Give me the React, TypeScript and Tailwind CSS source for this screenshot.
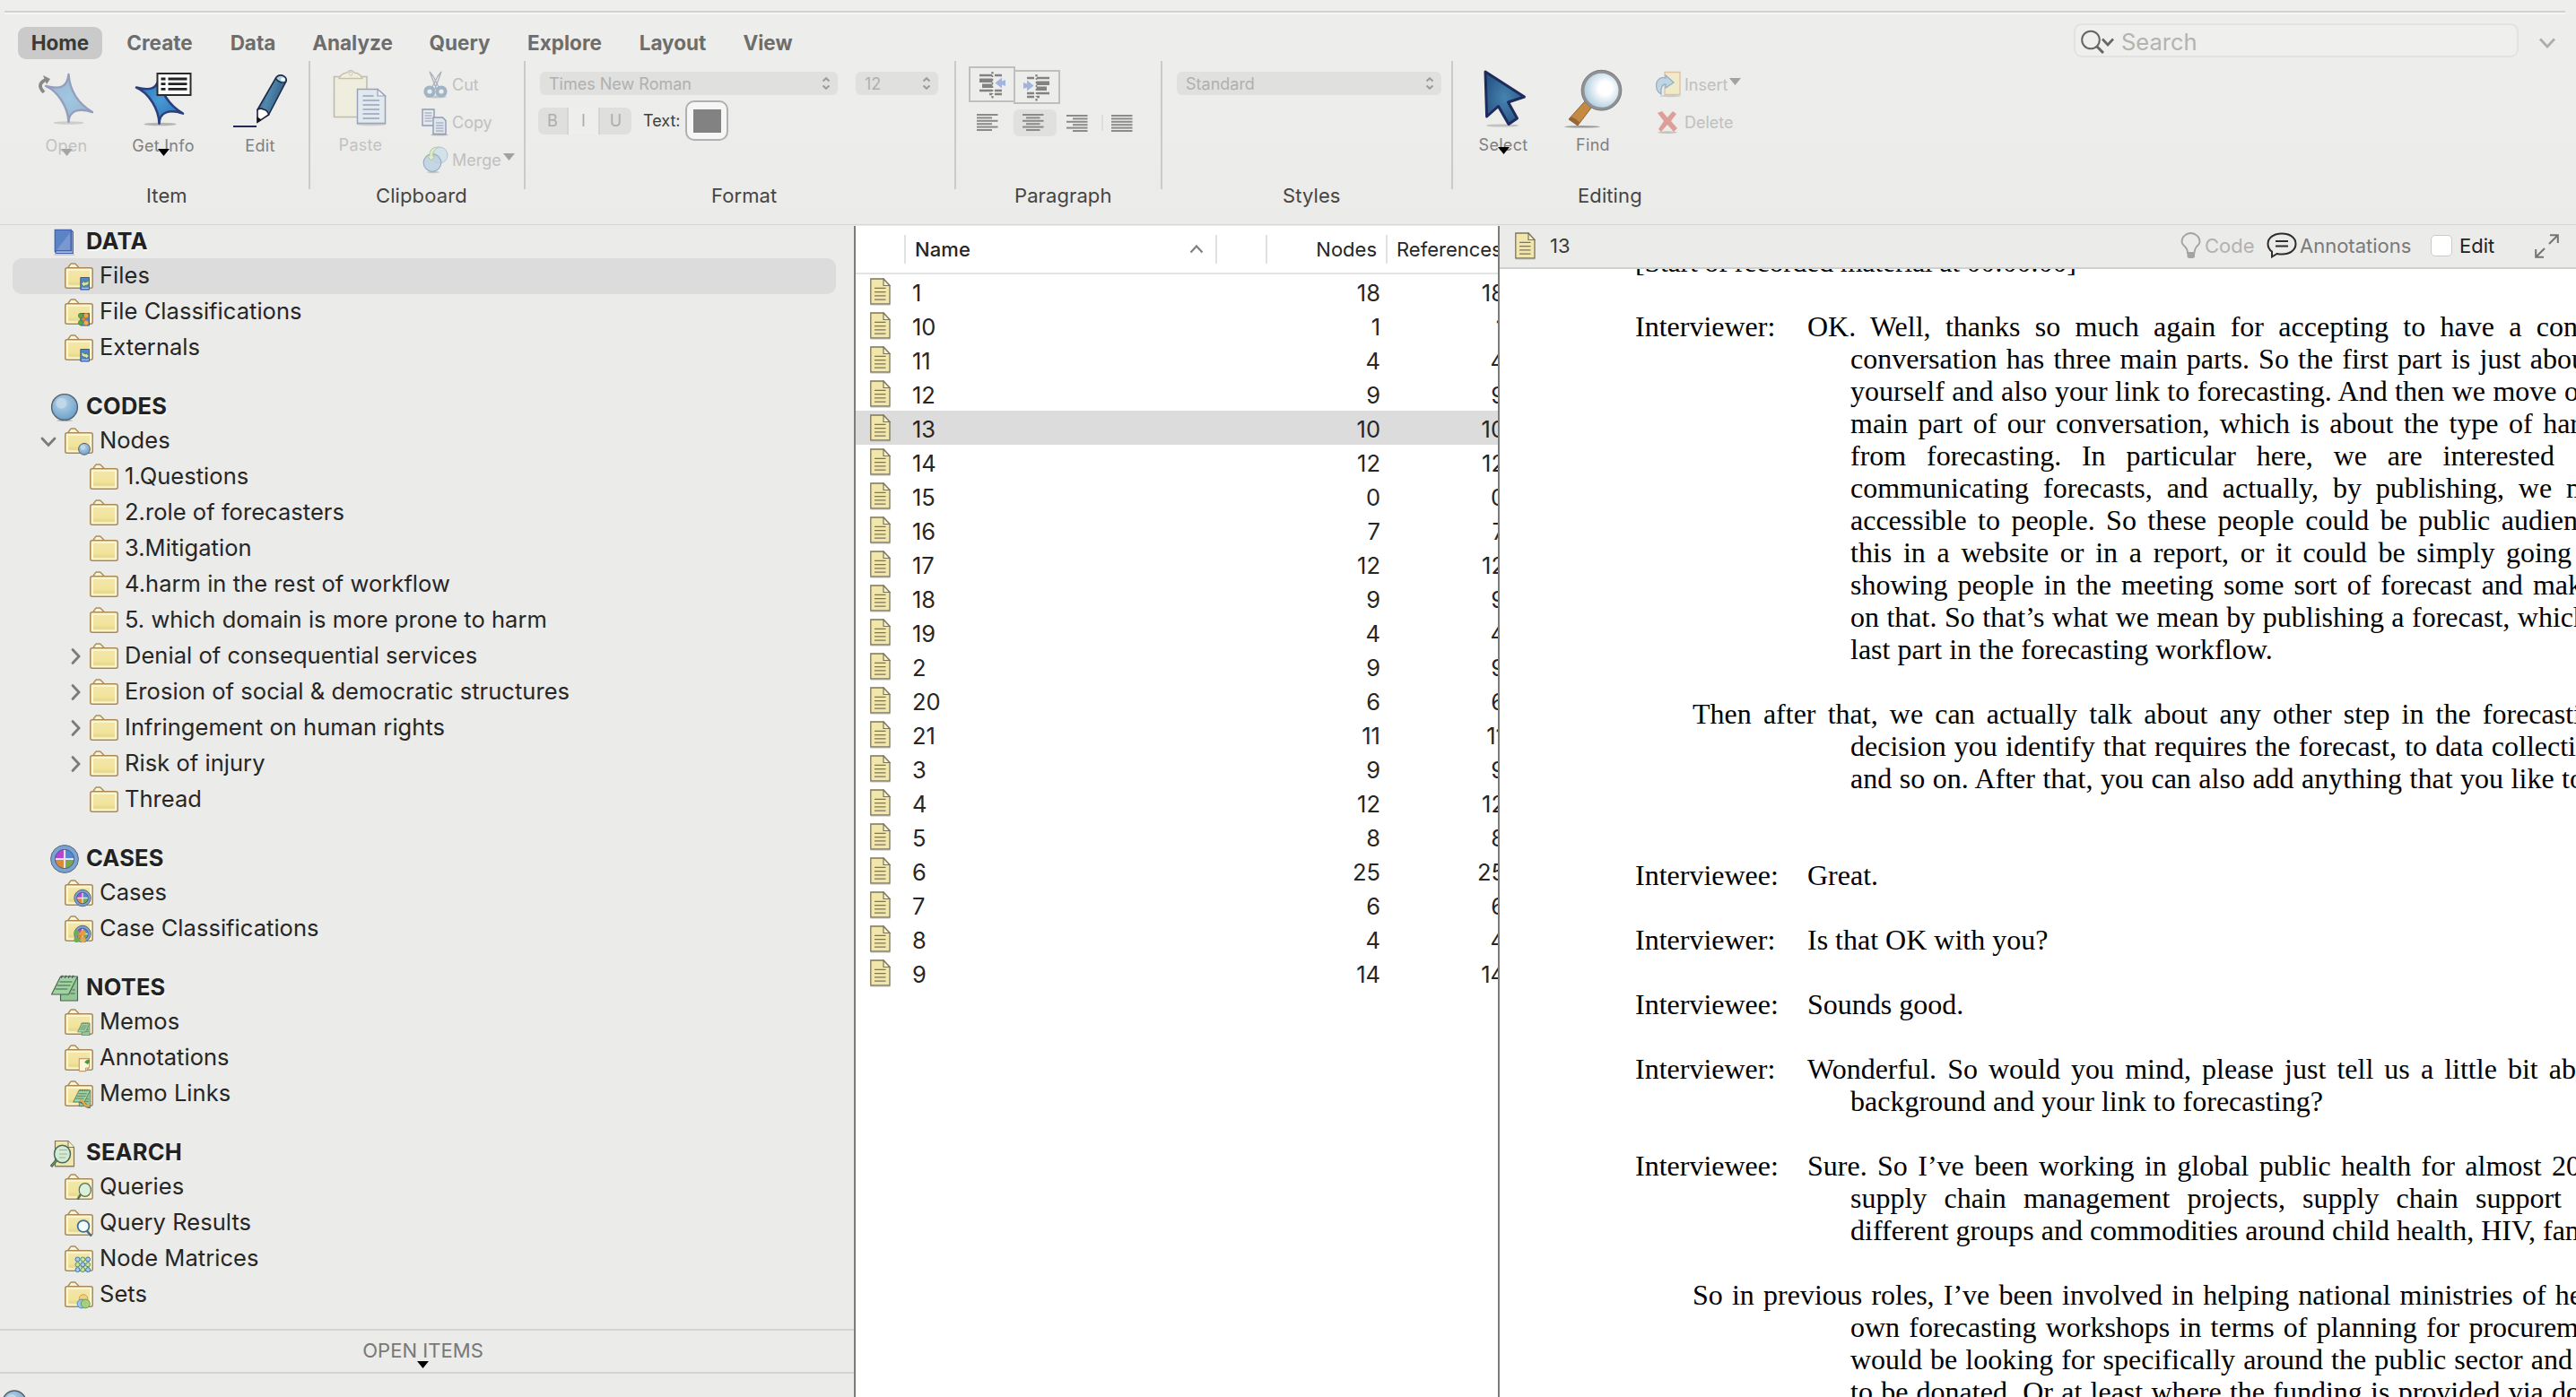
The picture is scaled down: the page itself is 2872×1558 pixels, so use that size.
import React from "react";

/* ---------- shared drawings ---------- */

const Ball = ({ cx, cy, r }: { cx: number; cy: number; r: number }) => (
  <g>
    <circle cx={cx} cy={cy} r={r} fill="url(#ball)" stroke="#55606b" strokeWidth={r > 8 ? 1.4 : 1} />
    <circle cx={cx - r * 0.25} cy={cy - r * 0.3} r={r * 0.42} fill="#c3dbea" opacity="0.8" />
  </g>
);

const Wheel = ({ cx, cy, r }: { cx: number; cy: number; r: number }) => {
  const i = r * 0.69;
  return (
    <g>
      <circle cx={cx} cy={cy} r={r} fill="#7ba3d2" stroke="#54687e" strokeWidth="1" />
      <circle cx={cx} cy={cy} r={i} fill="#5488d4" />
      <path d={`M${cx} ${cy}V${cy - i}A${i} ${i} 0 0 0 ${cx - i} ${cy}Z`} fill="#b546d3" />
      <path d={`M${cx} ${cy}H${cx - i}A${i} ${i} 0 0 0 ${cx} ${cy + i}Z`} fill="#dc8a35" />
      <path d={`M${cx} ${cy}V${cy + i}A${i} ${i} 0 0 0 ${cx + i} ${cy}Z`} fill="#79a650" />
      <path d={`M${cx} ${cy - i}V${cy + i}M${cx - i} ${cy}H${cx + i}`} stroke="#e6e6ea" strokeWidth={r * 0.14} />
      <circle cx={cx} cy={cy} r={i} fill="none" stroke="#46597a" strokeWidth="0.9" />
    </g>
  );
};

const Pad = () => (
  <g stroke="#4c5f51" strokeWidth="1.1" strokeLinejoin="round">
    <path d="M11 3H30V29H11Z" fill="#93c896" />
    <path d="M11 2H30L20 22H1Z" fill="#9dd4a0" />
    <path d="M10 8H24M7 12H22M5 16H19M24 17H27M22 21H27" fill="none" />
    <path d="M12 4q0-4 2-2M16 4q0-4 2-2M20 4q0-4 2-2M24 4q0-4 2-2" fill="none" />
  </g>
);

const Defs = () => (
  <svg className="absolute h-0 w-0">
    <defs>
      <radialGradient id="ball" cx="0.42" cy="0.35" r="0.75">
        <stop offset="0" stopColor="#b9d4e6" />
        <stop offset="0.55" stopColor="#8ab4d6" />
        <stop offset="1" stopColor="#5d97c6" />
      </radialGradient>
      <radialGradient id="star" cx="0.5" cy="0.5" r="0.5">
        <stop offset="0" stopColor="#4a9ad8" />
        <stop offset="1" stopColor="#2f77b6" />
      </radialGradient>
      <radialGradient id="cursor" cx="0.5" cy="0.5" r="0.55">
        <stop offset="0" stopColor="#4584b0" />
        <stop offset="1" stopColor="#2b5687" />
      </radialGradient>
      <linearGradient id="pencil" x1="0" y1="0" x2="1" y2="0.4">
        <stop offset="0" stopColor="#2c5a80" />
        <stop offset="0.5" stopColor="#5288ad" />
        <stop offset="1" stopColor="#2c5a80" />
      </linearGradient>
      <radialGradient id="lens" cx="0.6" cy="0.45" r="0.6">
        <stop offset="0.3" stopColor="#ffffff" />
        <stop offset="1" stopColor="#a9c9dc" />
      </radialGradient>
      <linearGradient id="folder" x1="0" y1="0" x2="0" y2="1">
        <stop offset="0" stopColor="#f1e6ab" />
        <stop offset="1" stopColor="#f3e293" />
      </linearGradient>
    </defs>
  </svg>
);

const Dots4 = () => (
  <g strokeWidth="0.6">
    <path d="M18 20L24 28M24 20L18 28" stroke="#b07b3a" strokeWidth="1.4" />
    <circle cx="18" cy="20" r="2.7" fill="#5aa546" stroke="#3f7d33" />
    <circle cx="24" cy="20" r="2.7" fill="#f0a53c" stroke="#b9772a" />
    <circle cx="18" cy="28" r="2.7" fill="#5aa546" stroke="#3f7d33" />
    <circle cx="24" cy="28" r="2.7" fill="#f0b04c" stroke="#b9772a" />
    <circle cx="21" cy="24" r="1.8" fill="#e8822b" />
  </g>
);

const Book = () => (
  <g>
    <path d="M17.8 17.5H27.5V31H17.8Z" fill="#5482cc" stroke="#3b59a8" strokeWidth="1" />
    <path d="M19 29.4H27" stroke="#b9cdef" strokeWidth="1.2" />
  </g>
);

type Badge =
  | "none" | "files" | "fileClass" | "externals" | "ball" | "wheel" | "caseClass"
  | "pad" | "note" | "padLink" | "query" | "results" | "matrix" | "sets";

const Folder = ({ badge = "none" }: { badge?: Badge }) => (
  <svg width="34" height="34" viewBox="0 0 34 34" className="shrink-0">
    <path d="M3.5 7L6.5 2.6Q7 2 8 2H11Q12 2 12.8 3L16.5 7" fill="#fbf5cf" stroke="#a98c60" strokeWidth="1.4" />
    <rect x="0.8" y="6.7" width="30.4" height="22.6" rx="2" fill="#fdf8d2" stroke="#a98857" strokeWidth="1.5" />
    <rect x="4" y="9.8" width="24" height="16.4" rx="1.2" fill="url(#folder)" />
    <path d="M4 22.5H28V25.5Q28 26.2 27 26.2H5Q4 26.2 4 25.5Z" fill="#eadb93" />
    {badge === "files" && (
      <g>
        <Book />
        <path d="M18.6 24.5L22.5 21V23Q25 23 27 20.5V25Q25 26.5 22.5 26.5V28.5Z" fill="#cfe6b4" stroke="#4f7a44" strokeWidth="0.8" />
      </g>
    )}
    {badge === "externals" && (
      <g>
        <Book />
        <path d="M27.4 25L23.5 21.5V23Q21 22.5 19 20V24.5Q21 26.5 23.5 26.5V28.5Z" fill="#cfe6b4" stroke="#4f7a44" strokeWidth="0.8" />
      </g>
    )}
    {badge === "fileClass" && (<g><Book /><Dots4 /></g>)}
    {badge === "ball" && <Ball cx={22} cy={24.8} r={6.4} />}
    {badge === "wheel" && <Wheel cx={20} cy={21.5} r={9.2} />}
    {badge === "caseClass" && (
      <g>
        <Wheel cx={20} cy={21.5} r={9.2} />
        <circle cx="13.5" cy="20.5" r="3.1" fill="#6fae4f" />
        <circle cx="20.5" cy="20.5" r="3.1" fill="#e6a03e" />
        <circle cx="17" cy="24" r="2.4" fill="#e8822b" />
        <circle cx="13.5" cy="28" r="3.1" fill="#6fae4f" />
        <circle cx="20.5" cy="28" r="3.1" fill="#e0a94a" />
      </g>
    )}
    {badge === "pad" && <g transform="translate(14 16) scale(0.47 0.5)"><Pad /></g>}
    {badge === "padLink" && (
      <g>
        <g transform="translate(9 10.5) scale(0.66)"><Pad /></g>
        <path d="M17 24Q21 25 23 28T28.5 30" fill="none" stroke="#3c6ea8" strokeWidth="3.4" />
        <path d="M17 23Q21 24 22 27T28 29" fill="none" stroke="#e9a93a" strokeWidth="2.4" />
      </g>
    )}
    {badge === "note" && (
      <g>
        <path d="M16.3 16.6H27.6V26L23.5 30.6H16.3Z" fill="#fcf6da" stroke="#c79a6b" strokeWidth="1.1" />
        <path d="M23.5 30.6V27H27.4" fill="none" stroke="#c79a6b" strokeWidth="1" />
        <path d="M22 20.5L25 18L28 17.5V21L25.5 23Z" fill="#4c9a3c" />
      </g>
    )}
    {badge === "query" && (
      <g>
        <path d="M18 24L14.5 29.5" stroke="#4f7350" strokeWidth="2.4" />
        <ellipse cx="22.8" cy="19" rx="6.6" ry="7.4" fill="#dcefd8" stroke="#54735a" strokeWidth="1.2" />
      </g>
    )}
    {badge === "results" && (
      <g>
        <path d="M25 25L30 30.5" stroke="#3b6f98" strokeWidth="2.6" />
        <circle cx="21" cy="19.5" r="6.4" fill="#f6fbff" stroke="#3d7099" strokeWidth="1.8" />
      </g>
    )}
    {badge === "matrix" &&
      [0, 1, 2].map((r) =>
        [0, 1, 2].map((c) => (
          <circle
            key={`${r}${c}`}
            cx={14.5 + c * 5.8}
            cy={16.5 + r * 5.8}
            r="2.5"
            fill={(r + c) % 2 ? "#c4e3a4" : "#a5cdf0"}
            stroke={(r + c) % 2 ? "#5f8f57" : "#41719f"}
            strokeWidth="1"
          />
        ))
      )}
    {badge === "sets" && (
      <g strokeWidth="0.9">
        <circle cx="21" cy="20.5" r="4.8" fill="#efd384" stroke="#c79a3c" />
        <circle cx="19" cy="26" r="4.9" fill="#9cc4ee" stroke="#4c7fc0" />
        <circle cx="23.3" cy="26" r="4.9" fill="#a5d07a" stroke="#5e9a3f" fillOpacity="0.9" />
      </g>
    )}
  </svg>
);

const Doc = () => (
  <svg width="24" height="31" viewBox="0 0 24 31" className="shrink-0">
    <path d="M0.5 29.8H22.5" stroke="#c9c9c7" strokeWidth="1.6" />
    <path d="M0.8 1H15L22 8.5V28.8H0.8Z" fill="#f1e7ac" stroke="#7c755c" strokeWidth="1.3" />
    <path d="M15 1V8.5H22Z" fill="#f8f2cc" stroke="#7c755c" strokeWidth="1.2" />
    <path d="M5 11.3H17.5M5 15.6H17.5M5 19.9H17.5M5 24.2H17.5" stroke="#7c755c" strokeWidth="1.3" />
  </svg>
);

const Tri = ({ className }: { className: string }) => (
  <svg width="13" height="8" viewBox="0 0 13 8" className={className}>
    <path d="M0 0H13L6.5 8Z" fill="currentColor" />
  </svg>
);

const UpDown = () => (
  <svg width="10" height="14" viewBox="0 0 10 14" fill="none" stroke="#9b9b9a" strokeWidth="2">
    <path d="M1.5 4.5L5 1.2L8.5 4.5M1.5 9.5L5 12.8L8.5 9.5" />
  </svg>
);

/* ---------- ribbon ---------- */

const tabs: [string, string][] = [
  ["Home", "w-[94px]"],
  ["Create", "w-[104px]"],
  ["Data", "w-[80px]"],
  ["Analyze", "w-[118px]"],
  ["Query", "w-[97px]"],
  ["Explore", "w-[113px]"],
  ["Layout", "w-[104px]"],
  ["View", "w-[84px]"],
];

const STAR = "M48.5 9C47 23 40 26 23 22C37 28 48 46 48.5 62C49 49 60 46 75 51C60 42 50 28 48.5 9Z";

const OpenIcon = () => (
  <svg width="92" height="78" viewBox="0 0 92 78" className="opacity-45">
    <ellipse cx="48.5" cy="63" rx="17" ry="1.8" fill="#a9a9a9" />
    <path d={STAR} fill="url(#star)" stroke="#2b4285" strokeWidth="2.4" strokeLinejoin="round" />
    <path d="M21 29Q12 20 23 15" fill="none" stroke="#111" strokeWidth="3.8" />
    <path d="M20 10L28 14L24 20Z" fill="#111" />
  </svg>
);

const InfoIcon = () => (
  <svg width="92" height="78" viewBox="0 0 92 78">
    <ellipse cx="42.5" cy="64.5" rx="18" ry="1.8" fill="#b5b5b5" />
    <path d={STAR} fill="url(#star)" stroke="#2b3f7d" strokeWidth="2.6" strokeLinejoin="round" transform="translate(-7 1.6)" />
    <rect x="39.5" y="8" width="37" height="24" fill="#fff" stroke="#2b2b2b" strokeWidth="2" />
    <path d="M43.5 14H48.5M51.5 14H72.5M43.5 19.7H48.5M51.5 19.7H72.5M43.5 25.4H48.5M51.5 25.4H72.5" stroke="#222" strokeWidth="2.8" />
  </svg>
);

const EditIcon = () => (
  <svg width="92" height="78" viewBox="0 0 92 78">
    <path d="M16 67H42" stroke="#222a56" strokeWidth="2" />
    <path d="M43 48.5L63.5 13Q66 9 71 10.3Q76 12 74.8 17L55.5 54Z" fill="url(#pencil)" stroke="#1f2a4a" strokeWidth="1.6" />
    <path d="M63.5 13Q66 9 71 10.3Q76 12 74.8 17Q72 19 68.5 17.5Q64.5 16 63.5 13Z" fill="#a8cfe2" stroke="#1f2a4a" strokeWidth="1.4" />
    <ellipse cx="71.5" cy="14.4" rx="2.4" ry="1.8" fill="#fff" />
    <path d="M43 48.5Q46 46 50 48Q55 49.5 55.5 54L43 62.3Z" fill="#fff" stroke="#1f2038" strokeWidth="1.6" />
    <path d="M42.6 56L47.5 59.5L42.6 63Z" fill="#111" />
  </svg>
);

const PasteIcon = () => (
  <svg width="92" height="78" viewBox="0 0 92 78" className="opacity-45">
    <ellipse cx="58" cy="64.5" rx="17" ry="1.8" fill="#a9a9a9" />
    <path d="M16.5 11.5H53V56.5H16.5Z" fill="#f1efcf" stroke="#8a8467" strokeWidth="1.6" />
    <path d="M22 13.5Q24 8 31 7Q35 2 39 7Q46 8 48 13.5Z" fill="#f7f1c9" stroke="#9a8f68" strokeWidth="1.4" />
    <circle cx="35" cy="8.3" r="1.8" fill="#fff" stroke="#9a8f68" />
    <path d="M42.5 25.5H65L73.5 33V63.5H42.5Z" fill="#d3e6f2" stroke="#39477f" strokeWidth="1.5" />
    <path d="M65 25.5V33H73.5Z" fill="#f3f8fc" stroke="#39477f" strokeWidth="1.2" />
    <path d="M48.5 33H60.5M48.5 38H67M48.5 43H67M48.5 48H67M48.5 53H67M48.5 58H67" stroke="#39477f" strokeWidth="1.6" />
  </svg>
);

const CutIcon = () => (
  <svg width="32" height="34" viewBox="0 0 32 34" className="opacity-40">
    <ellipse cx="16" cy="31" rx="12" ry="1.4" fill="#888" />
    <path d="M9 3L13 8L20 22L16.5 22ZM22 3L18 8L11 22L15 22Z" fill="#fff" stroke="#4a5878" strokeWidth="1.3" />
    <circle cx="9" cy="25" r="4.6" fill="none" stroke="#2c618f" strokeWidth="4" />
    <circle cx="22" cy="25" r="4.6" fill="none" stroke="#2c618f" strokeWidth="4" />
  </svg>
);

const CopyIcon = () => (
  <svg width="32" height="34" viewBox="0 0 32 34" className="opacity-50">
    <ellipse cx="20" cy="31.4" rx="10" ry="1.2" fill="#999" />
    <path d="M1 3H14V21H1Z" fill="#dfeaf4" stroke="#39477f" strokeWidth="1.4" />
    <path d="M3.5 7H11.5M3.5 10H11.5M3.5 13H11.5M3.5 16H11.5" stroke="#39477f" strokeWidth="1.1" />
    <path d="M13 12H23.5L27 15.5V30.5H13Z" fill="#cfe2f1" stroke="#39477f" strokeWidth="1.4" />
    <path d="M16 18H24.5M16 21H24.5M16 24H24.5M16 27H24.5" stroke="#39477f" strokeWidth="1.2" />
  </svg>
);

const MergeIcon = () => (
  <svg width="32" height="34" viewBox="0 0 32 34" className="opacity-45">
    <ellipse cx="13" cy="31" rx="7" ry="1.2" fill="#999" />
    <circle cx="20" cy="12" r="9" fill="#b8d4ec" stroke="#6a8fb3" strokeWidth="1" />
    <circle cx="12" cy="20.5" r="9.8" fill="#7fb2dc" fillOpacity="0.8" stroke="#34618f" strokeWidth="1.2" />
    <path d="M19 3Q8 3 9 13H6L11 18L15 13H12.5Q12 7 19 3Z" fill="#cbe8a6" stroke="#6f9f4e" strokeWidth="1" />
  </svg>
);

const SelectIcon = () => (
  <svg width="92" height="78" viewBox="0 0 92 78">
    <ellipse cx="45" cy="66" rx="18" ry="1.6" fill="#c2c2c2" />
    <path d="M26 6L69.5 34L51.5 40L61.5 58L52 64.5L40.5 44.5L27.6 56Z" fill="url(#cursor)" stroke="#1d2c5c" strokeWidth="3" strokeLinejoin="round" />
  </svg>
);

const FindIcon = () => (
  <svg width="92" height="78" viewBox="0 0 92 78">
    <ellipse cx="34" cy="67.3" rx="20" ry="1.2" fill="#9a9a9a" />
    <g transform="translate(-1 0)">
      <path d="M37.5 39.5L46 45L30 66L20 59Z" fill="#c48a42" stroke="#8a6031" strokeWidth="1" />
      <path d="M20 59L30 66L32 62.5Q28 58 22.5 56Z" fill="#966538" />
      <circle cx="56.5" cy="26.7" r="20.8" fill="url(#lens)" stroke="#8f9194" strokeWidth="3.6" />
      <circle cx="56.5" cy="26.7" r="22.4" fill="none" stroke="#77797c" strokeWidth="0.8" />
    </g>
  </svg>
);

const BigButton = ({
  icon, label, tone, arrow, up,
}: { icon: React.ReactNode; label: string; tone: string; arrow?: string; up?: boolean }) => (
  <div className="relative flex w-[92px] shrink-0 flex-col items-center">
    {icon}
    <span className={`${up ? "mt-0" : "mt-[1px]"} whitespace-nowrap text-[18px] leading-[20px] tracking-[0.3px] ${tone}`}>{label}</span>
    {arrow && <Tri className={`absolute left-[40px] ${up ? "top-[90px]" : "top-[92px]"} ${arrow}`} />}
  </div>
);

const SmallRow = ({ icon, label, arrow }: { icon: React.ReactNode; label: string; arrow?: boolean }) => (
  <div className="flex h-[42px] items-center">
    <div className="w-[34px] shrink-0">{icon}</div>
    <span className="pt-[1px] text-[18px] leading-[20px] text-[#c0c0bf]">{label}</span>
    {arrow && <Tri className="mb-[6px] ml-[2px] text-[#a2a2a1]" />}
  </div>
);

const Group = ({
  width, label, pad, last, children,
}: { width: string; label: string; pad: string; last?: boolean; children: React.ReactNode }) => (
  <div className={`flex h-[181px] shrink-0 flex-col ${width}`}>
    <div className={`h-[143px] pt-[6px] ${last ? "" : "border-r-2 border-[#cacac9]"}`}>{children}</div>
    <div className={`-mt-[8px] text-[22px] leading-[30px] tracking-[0.1px] text-[#454544] ${pad}`}>{label}</div>
  </div>
);

const Picker = ({ width, children }: { width: string; children: React.ReactNode }) => (
  <div className={`flex h-[26px] items-center justify-between rounded-[6px] bg-[#e0e0df] pl-[10px] pr-[8px] text-[18px] leading-[20px] text-[#b0b0af] ${width}`}>
    <span className="pt-[1px]">{children}</span>
    <UpDown />
  </div>
);

const Lines = ({ kind }: { kind: "left" | "center" | "right" | "full" }) => (
  <svg width="24" height="20" viewBox="0 0 24 20" stroke="#8b8b8a" strokeWidth="2">
    {[1, 4.4, 7.8, 11.2, 14.6, 18].map((y, i) => {
      const short = i % 2 === 1 && kind !== "full";
      const x1 = !short ? 0 : kind === "left" ? 0 : kind === "center" ? 4 : 7;
      const x2 = !short ? 23.5 : kind === "left" ? 17 : kind === "center" ? 19.5 : 23.5;
      return <line key={y} x1={x1} x2={x2} y1={y} y2={y} />;
    })}
  </svg>
);

const IndentIcon = ({ flip }: { flip?: boolean }) => (
  <svg width="30" height="34" viewBox="0 0 30 34" className={`shrink-0 ${flip ? "-scale-x-100" : ""}`}>
    <g stroke="#828281">
      <path d="M15.5 3V5.5M15.5 30V32.5" strokeWidth="2.2" />
      <path d="M15.5 7V28" strokeWidth="1.6" strokeDasharray="2 2" />
      <path d="M1 7H15M18 7H26M1 24H15M18 24H26M12 28H15M18 28H26" strokeWidth="2.4" />
      <path d="M1 12.8H15.5M4 18.8H15.5" strokeWidth="4.4" />
    </g>
    <path d="M18.5 15.5L26 9.5V13.5L30 12V19L26 17.5V21.5Z" fill="#a3b4dc" />
  </svg>
);

const Ribbon = () => (
  <div className="flex h-[250px] shrink-0 flex-col bg-gradient-to-b from-[#eeeeec] to-[#ebebe9]">
    <div className="ml-[5px] mr-[12px] mt-[12px] h-[4px] shrink-0 border-b-2 border-t-2 border-b-[#f6f6f5] border-t-[#d1d1d0]" />
    <div className="flex h-[52px] shrink-0 items-start justify-between">
      <div className="ml-[20px] mt-[14px] flex gap-[12px]">
        {tabs.map(([t, w], i) => (
          <div
            key={t}
            className={`flex h-[36px] items-center justify-center rounded-[9px] text-[22.5px] font-bold leading-[36px] ${w} ${
              i === 0 ? "bg-[#cacaca] text-[#3a3a3a]" : "text-[#6d6d6c]"
            }`}
          >
            {t}
          </div>
        ))}
      </div>
      <div className="flex items-start">
        <div className="mt-[10px] flex h-[38px] w-[496px] items-center rounded-[9px] border-2 border-[#e2e2e1] bg-[#efefed] pl-[6px]">
          <svg width="38" height="28" viewBox="0 0 38 28" fill="none" stroke="#666665" className="mt-[2px]">
            <circle cx="11" cy="12.5" r="9.8" strokeWidth="2" />
            <path d="M17.5 19.5L25 27" strokeWidth="3" />
            <path d="M24 11.5L30 18L36 11.5" strokeWidth="2.6" />
          </svg>
          <span className="ml-[7px] mt-[3px] text-[25.5px] leading-[31px] text-[#b3b3b2]">Search</span>
        </div>
        <svg width="18" height="12" viewBox="0 0 18 12" className="ml-[23px] mr-[23px] mt-[26px]" fill="none" stroke="#aeaead" strokeWidth="2.8">
          <path d="M1 1.5L9 10L17 1.5" />
        </svg>
      </div>
    </div>
    <div className="flex">
      <Group width="w-[346px]" label="Item" pad="pl-[163px]">
        <div className="flex gap-[16px] pl-[28px]">
          <BigButton icon={<OpenIcon />} label="Open" tone="text-[#c2c2c1]" arrow="text-[#a5a5a4]" />
          <BigButton icon={<InfoIcon />} label="Get Info" tone="text-[#80807f]" arrow="text-black" />
          <BigButton icon={<EditIcon />} label="Edit" tone="text-[#80807f]" />
        </div>
      </Group>
      <Group width="w-[240px]" label="Clipboard" pad="pl-[73px]">
        <div className="flex pl-[10px]">
          <BigButton icon={<PasteIcon />} label="Paste" tone="text-[#c2c2c1]" up />
          <div className="ml-[22px] mt-[-1px]">
            <SmallRow icon={<CutIcon />} label="Cut" />
            <SmallRow icon={<CopyIcon />} label="Copy" />
            <SmallRow icon={<MergeIcon />} label="Merge" arrow />
          </div>
        </div>
      </Group>
      <Group width="w-[480px]" label="Format" pad="pl-[207px]">
        <div className="flex gap-[20px] pl-[16px] pt-[6px]">
          <Picker width="w-[332px]">Times New Roman</Picker>
          <Picker width="w-[92px]">12</Picker>
        </div>
        <div className="flex items-center pl-[14px] pt-[6px]">
          <div className="flex h-[30px] w-[104px] overflow-hidden rounded-[7px] bg-[#dfdfde] text-center text-[18px] leading-[29px] text-[#adadac]">
            <span className="w-[32px]">B</span>
            <span className="w-[37px] border-x-2 border-[#d5d5d4] bg-[#eeeeed]">I</span>
            <span className="w-[35px]">U</span>
          </div>
          <span className="ml-[13px] w-[47px] pt-[1px] text-[18px] leading-[20px] text-[#3f3f3e]">Text:</span>
          <div className="flex h-[45px] w-[48px] items-center justify-center rounded-[10px] border-2 border-[#b0b0af] bg-[#f6f6f6]">
            <div className="h-[26px] w-[31px] bg-[#828282]" />
          </div>
        </div>
      </Group>
      <Group width="w-[230px]" label="Paragraph" pad="pl-[65px]">
        <div className="flex items-start pl-[14px]">
          <div className="flex h-[40px] w-[52px] items-center justify-center border-2 border-[#bfbfbe]"><IndentIcon /></div>
          <div className="-ml-[2px] mt-[4px] flex h-[38px] w-[52px] items-center justify-center border-2 border-[#bfbfbe]"><IndentIcon flip /></div>
        </div>
        <div className="mt-[6px] flex items-center pl-[23px]">
          <Lines kind="left" />
          <div className="ml-[17px] mr-[11px] flex h-[30px] w-[48px] items-center rounded-[6px] bg-[#e0e0df] pl-[10px]"><Lines kind="center" /></div>
          <div className="mt-[2px]"><Lines kind="right" /></div>
          <div className="ml-[15px] mr-[9px] h-[18px] w-[2px] bg-[#dededd]" />
          <div className="mt-[2px]"><Lines kind="full" /></div>
        </div>
      </Group>
      <Group width="w-[324px]" label="Styles" pad="pl-[134px]">
        <div className="pl-[16px] pt-[6px]">
          <Picker width="w-[295px]">Standard</Picker>
        </div>
      </Group>
      <Group width="w-[400px]" label="Editing" pad="pl-[139px]" last>
        <div className="flex pl-[10px]">
          <BigButton icon={<SelectIcon />} label="Select" tone="text-[#80807f]" arrow="text-black" up />
          <div className="ml-[8px]"><BigButton icon={<FindIcon />} label="Find" tone="text-[#80807f]" up /></div>
          <div className="ml-[22px] mt-[-1px]">
            <SmallRow
              icon={
                <svg width="32" height="34" viewBox="0 0 32 34" className="opacity-50">
                  <path d="M12 3.5H29V28.5H12Z" fill="#f3e9a8" stroke="#d59a60" strokeWidth="1.4" />
                  <ellipse cx="18" cy="30" rx="12" ry="1.2" fill="#aaa" />
                  <path d="M8 28Q1 24 3 15Q6 8 13 10V7L22 15L13 21V17Q7 17 8 28Z" fill="#8fc0e0" stroke="#4a6f95" strokeWidth="1.3" />
                </svg>
              }
              label="Insert"
              arrow
            />
            <SmallRow
              icon={
                <svg width="32" height="34" viewBox="0 0 32 34" className="opacity-50">
                  <ellipse cx="15" cy="28.6" rx="11" ry="1.3" fill="#999" />
                  <path d="M4 7L9 5L15 12L21 5L25 8L19 16L26 24L22 28L15 20L8 28L5 25L11 16Z" fill="#d0524c" />
                </svg>
              }
              label="Delete"
            />
          </div>
        </div>
      </Group>
    </div>
  </div>
);

/* ---------- sidebar ---------- */

type Item = { label: string; badge?: Badge; deep?: boolean; chevron?: "down" | "right"; selected?: boolean };
type Section = { title: string; icon: React.ReactNode; items: Item[] };

const sections: Section[] = [
  {
    title: "DATA",
    icon: (
      <svg width="34" height="34" viewBox="0 0 34 34">
        <path d="M4.5 31H27" stroke="#c4c4c2" strokeWidth="1.6" />
        <path d="M7 29.3H25.3V5.5L23.5 4V26.5H7Q5.6 26.8 5.6 28Q5.6 29.3 7 29.3Z" fill="#c7d5ef" stroke="#4460b2" strokeWidth="1.3" />
        <path d="M5.3 3.3H23.2V26.6H7.5Q5.6 26.8 5.3 28Z" fill="#5b84c6" />
        <path d="M22.6 6V26H7Z" fill="#7898cf" />
        <path d="M5.3 28V3.3H23.2V26.6H7.5Q5.6 26.8 5.3 28Z" fill="none" stroke="#4460b2" strokeWidth="1.3" />
      </svg>
    ),
    items: [
      { label: "Files", badge: "files", selected: true },
      { label: "File Classifications", badge: "fileClass" },
      { label: "Externals", badge: "externals" },
    ],
  },
  {
    title: "CODES",
    icon: (
      <svg width="34" height="34" viewBox="0 0 34 34">
        <ellipse cx="16" cy="32" rx="9" ry="1.2" fill="#b5b5b3" />
        <Ball cx={16} cy={17} r={14.4} />
      </svg>
    ),
    items: [
      { label: "Nodes", badge: "ball", chevron: "down" },
      { label: "1.Questions", deep: true },
      { label: "2.role of forecasters", deep: true },
      { label: "3.Mitigation", deep: true },
      { label: "4.harm in the rest of workflow", deep: true },
      { label: "5. which domain is more prone to harm", deep: true },
      { label: "Denial of consequential services", deep: true, chevron: "right" },
      { label: "Erosion of social & democratic structures", deep: true, chevron: "right" },
      { label: "Infringement on human rights", deep: true, chevron: "right" },
      { label: "Risk of injury", deep: true, chevron: "right" },
      { label: "Thread", deep: true },
    ],
  },
  {
    title: "CASES",
    icon: (
      <svg width="34" height="34" viewBox="0 0 34 34"><Wheel cx={16} cy={17} r={15.4} /></svg>
    ),
    items: [
      { label: "Cases", badge: "wheel" },
      { label: "Case Classifications", badge: "caseClass" },
    ],
  },
  {
    title: "NOTES",
    icon: (
      <svg width="34" height="34" viewBox="0 0 34 34"><g transform="translate(0.5 2)"><Pad /></g></svg>
    ),
    items: [
      { label: "Memos", badge: "pad" },
      { label: "Annotations", badge: "note" },
      { label: "Memo Links", badge: "padLink" },
    ],
  },
  {
    title: "SEARCH",
    icon: (
      <svg width="34" height="34" viewBox="0 0 34 34">
        <path d="M5 32.6H27" stroke="#c4c4c2" strokeWidth="1.4" />
        <path d="M5.5 3.5H20L26.5 10.5V31.5H5.5Z" fill="#f1e7ac" stroke="#7c755c" strokeWidth="1.2" />
        <path d="M20 3.5V10.5H26.5" fill="#f8f2cc" stroke="#7c755c" strokeWidth="1.1" />
        <path d="M7 25L1 32" stroke="#3f5f46" strokeWidth="3" />
        <path d="M7 25L1.5 31.4" stroke="#6c9a63" strokeWidth="1.4" />
        <ellipse cx="13.5" cy="18" rx="9" ry="9.8" fill="#d3ead4" stroke="#4b6a58" strokeWidth="1.5" />
        <path d="M10 13.5H19M10 18H19M10 22H17" stroke="#9ab39e" strokeWidth="1.2" />
      </svg>
    ),
    items: [
      { label: "Queries", badge: "query" },
      { label: "Query Results", badge: "results" },
      { label: "Node Matrices", badge: "matrix" },
      { label: "Sets", badge: "sets" },
    ],
  },
];

const SidebarItem = ({ item }: { item: Item }) => (
  <div className={`ml-[14px] mr-[20px] flex h-[40px] items-center rounded-[10px] ${item.selected ? "bg-[#dcdcdc]" : ""}`}>
    <div className={`flex shrink-0 items-center ${item.deep ? "w-[86px] pl-[65px]" : "w-[58px] pl-[31px]"}`}>
      {item.chevron === "down" && (
        <svg width="18" height="12" viewBox="0 0 18 12" fill="none" stroke="#7b7b7a" strokeWidth="2.8" strokeLinecap="round" className="mt-[2px]">
          <path d="M2 2L9 9.5L16 2" />
        </svg>
      )}
      {item.chevron === "right" && (
        <svg width="12" height="20" viewBox="0 0 12 20" fill="none" stroke="#7b7b7a" strokeWidth="2.8" strokeLinecap="round">
          <path d="M2 2.5L9 10L2 17.5" />
        </svg>
      )}
    </div>
    <div className="mt-[2px]"><Folder badge={item.badge} /></div>
    <span className="ml-[5px] whitespace-nowrap pb-[3px] text-[25.5px] leading-[37px] tracking-[0.04px] text-[#262626]">{item.label}</span>
  </div>
);

const Sidebar = () => (
  <div className="flex w-[952px] shrink-0 flex-col bg-[#ebebe9]">
    <div className="flex h-[1230px] shrink-0 flex-col gap-[28px]">
      {sections.map((s) => (
        <div key={s.title}>
          <div className="flex h-[36px] items-center pl-[56px]">
            {s.icon}
            <span className="ml-[6px] pb-[2px] text-[25.5px] font-bold leading-[34px] tracking-[0.2px] text-[#222] [text-shadow:1px_2px_1px_#fbfbfa]">{s.title}</span>
          </div>
          {s.items.map((it) => <SidebarItem key={it.label} item={it} />)}
        </div>
      ))}
    </div>
    <div className="relative flex h-[50px] shrink-0 justify-center border-b-2 border-t-2 border-[#d3d3d2] pr-[9px] pt-[7px] text-[22px] leading-[30px] tracking-[0.05px] text-[#787877]">
      OPEN ITEMS
      <Tri className="absolute left-[465px] top-[34px] text-black" />
    </div>
    <div className="min-h-0 flex-1 overflow-hidden pl-[2px] pt-[18px]">
      <svg width="28" height="28" viewBox="0 0 28 28"><Ball cx={14} cy={14} r={13} /></svg>
    </div>
  </div>
);

/* ---------- file list ---------- */

const files: [string, number][] = [
  ["1", 18], ["10", 1], ["11", 4], ["12", 9], ["13", 10], ["14", 12], ["15", 0],
  ["16", 7], ["17", 12], ["18", 9], ["19", 4], ["2", 9], ["20", 6], ["21", 11],
  ["3", 9], ["4", 12], ["5", 8], ["6", 25], ["7", 6], ["8", 4], ["9", 14],
];

const FileList = () => (
  <div className="w-[720px] shrink-0 overflow-hidden border-x-2 border-[#7c7c7b] bg-white text-[#262626]">
    <div className="w-[800px]">
      <div className="flex h-[54px] items-start border-b-2 border-[#e3e3e3] pt-[10px] text-[22px] font-medium leading-[32px]">
        <div className="h-[32px] w-[56px] border-r-2 border-[#e1e1e1]" />
        <div className="flex h-[32px] w-[347px] items-center justify-between border-r-2 border-[#e1e1e1] pl-[10px] pr-[13px]">
          <span className="tracking-[0.1px]">Name</span>
          <svg width="16" height="10" viewBox="0 0 16 10" fill="none" stroke="#80807f" strokeWidth="2.2"><path d="M1.5 8.5L8 1.5L14.5 8.5" /></svg>
        </div>
        <div className="h-[32px] w-[56px] border-r-2 border-[#e1e1e1]" />
        <div className="h-[32px] w-[134px] border-r-2 border-[#e1e1e1] pr-[10px] text-right font-normal">Nodes</div>
        <div className="h-[32px] pl-[10px] font-normal">References</div>
      </div>
      {files.map(([name, n]) => (
        <div key={name} className={`flex h-[38px] items-center ${name === "13" ? "bg-[#dcdcdc]" : ""}`}>
          <div className="w-[63px] pl-[16px]"><Doc /></div>
          <div className="w-[400px] pt-[3px] text-[25.5px] leading-[35px]">{name}</div>
          <div className="w-[122px] pt-[3px] text-right text-[25.5px] leading-[35px]">{n}</div>
          <div className="w-[139px] pt-[3px] text-right text-[25.5px] leading-[35px]">{n}</div>
        </div>
      ))}
    </div>
  </div>
);

/* ---------- transcript ---------- */

type Line = { who?: string; text: string; at: "turn" | "hang" | "para" | "start"; w?: number };

const lines: (Line | null)[] = [
  { text: "[Start of recorded material at 00:00:00]", at: "start" },
  null,
  { who: "Interviewer:", text: "OK. Well, thanks so much again for accepting to have a con", at: "turn", w: 859 },
  { text: "conversation has three main parts. So the first part is just abou", at: "hang", w: 820 },
  { text: "yourself and also your link to forecasting. And then we move o", at: "hang", w: 812 },
  { text: "main part of our conversation, which is about the type of har", at: "hang", w: 813 },
  { text: "from forecasting. In particular here, we are interested", at: "hang", w: 785 },
  { text: "communicating forecasts, and actually, by publishing, we m", at: "hang", w: 823 },
  { text: "accessible to people. So these people could be public audien", at: "hang", w: 811 },
  { text: "this in a website or in a report, or it could be simply going", at: "hang", w: 804 },
  { text: "showing people in the meeting some sort of forecast and mak", at: "hang", w: 816 },
  { text: "on that. So that’s what we mean by publishing a forecast, which", at: "hang", w: 822 },
  { text: "last part in the forecasting workflow.", at: "hang" },
  null,
  { text: "Then after that, we can actually talk about any other step in the forecasti", at: "para", w: 991 },
  { text: "decision you identify that requires the forecast, to data collecti", at: "hang", w: 809 },
  { text: "and so on. After that, you can also add anything that you like to", at: "hang", w: 818 },
  null,
  null,
  { who: "Interviewee:", text: "Great.", at: "turn" },
  null,
  { who: "Interviewer:", text: "Is that OK with you?", at: "turn" },
  null,
  { who: "Interviewee:", text: "Sounds good.", at: "turn" },
  null,
  { who: "Interviewer:", text: "Wonderful. So would you mind, please just tell us a little bit ab", at: "turn", w: 857 },
  { text: "background and your link to forecasting?", at: "hang" },
  null,
  { who: "Interviewee:", text: "Sure. So I’ve been working in global public health for almost 20", at: "turn", w: 862 },
  { text: "supply chain management projects, supply chain support", at: "hang", w: 793 },
  { text: "different groups and commodities around child health, HIV, fam", at: "hang" },
  null,
  { text: "So in previous roles, I’ve been involved in helping national ministries of he", at: "para", w: 992 },
  { text: "own forecasting workshops in terms of planning for procurem", at: "hang", w: 812 },
  { text: "would be looking for specifically around the public sector and", at: "hang", w: 805 },
  { text: "to be donated. Or at least where the funding is provided via do", at: "hang", w: 814 },
];

const indent = { start: "pl-[151px]", turn: "pl-[151px]", hang: "pl-[391px]", para: "pl-[215px]" };

const Transcript = () => (
  <div className="flex min-w-0 flex-1 flex-col bg-white">
    <div className="flex h-[48px] shrink-0 items-center border-b-2 border-[#d0d0cf] bg-[#ebebe9] pb-[2px] pl-[17px] text-[22px] leading-[30px]">
      <Doc />
      <span className="ml-[15px] text-[#3a3a39]">13</span>
      <div className="ml-auto flex items-center">
        <svg width="24" height="30" viewBox="0 0 24 30" fill="none" stroke="#a3a3a2" strokeWidth="1.8">
          <path d="M8 23Q8 19 5 16Q1.5 13 1.5 10.5A10 9.5 0 0 1 21.5 10.5Q21.5 13 18 16Q15.5 19 15.5 23Z" />
          <path d="M7.5 23.5H16V27Q16 29 11.8 29Q7.5 29 7.5 27Z" fill="#a3a3a2" stroke="none" />
        </svg>
        <span className="ml-[3px] w-[69px] text-[#b2b2b1]">Code</span>
        <svg width="34" height="30" viewBox="0 0 34 30" fill="none" stroke="#2d2d2c" strokeWidth="2">
          <path d="M6 27.5V21.5Q1.5 18.5 1.5 13C1.5 6 8 1.5 17 1.5S32.5 6 32.5 13S26 24.5 17 24.5Q13.5 24.5 11.5 24Z" />
          <path d="M10 10H24M10 15.5H24" />
        </svg>
        <span className="ml-[3px] w-[146px] text-[#7a7a79]">Annotations</span>
        <div className="h-[24px] w-[24px] rounded-[5px] border border-[#cbcbca] bg-white" />
        <span className="ml-[8px] w-[84px] text-[#222]">Edit</span>
        <svg width="27" height="27" viewBox="0 0 27 27" fill="none" stroke="#747473" strokeWidth="2" className="mr-[19px]">
          <path d="M17 1.2H25.8V10M25.8 1.2L16 11M1.2 17V25.8H10M1.2 25.8L11 16" />
        </svg>
      </div>
    </div>
    <div className="min-h-0 flex-1 overflow-hidden font-['Liberation_Serif',serif] text-[32px] leading-[36px] text-black">
      <div className="-mt-[26px]">
        {lines.map((l, i) =>
          l === null ? (
            <div key={i} className="h-[36px]" />
          ) : (
            <div key={i} className={`flex h-[36px] w-[1400px] ${indent[l.at]} ${l.at === "start" ? "tracking-[-0.26px]" : ""}`}>
              {l.who && <span className="w-[192px] shrink-0">{l.who}</span>}
              <span className={`shrink-0 ${l.w ? "block [text-align-last:justify]" : "whitespace-nowrap"}`} style={l.w ? { width: l.w } : undefined}>
                {l.text}
              </span>
            </div>
          )
        )}
      </div>
    </div>
  </div>
);

export default function App() {
  return (
    <div className="flex h-[1558px] w-[2872px] flex-col overflow-hidden bg-[#ebebe9] font-[Inter,sans-serif]">
      <Defs />
      <Ribbon />
      <div className="flex min-h-0 flex-1 border-t border-[#d6d6d5] pt-px">
        <Sidebar />
        <FileList />
        <Transcript />
      </div>
    </div>
  );
}
